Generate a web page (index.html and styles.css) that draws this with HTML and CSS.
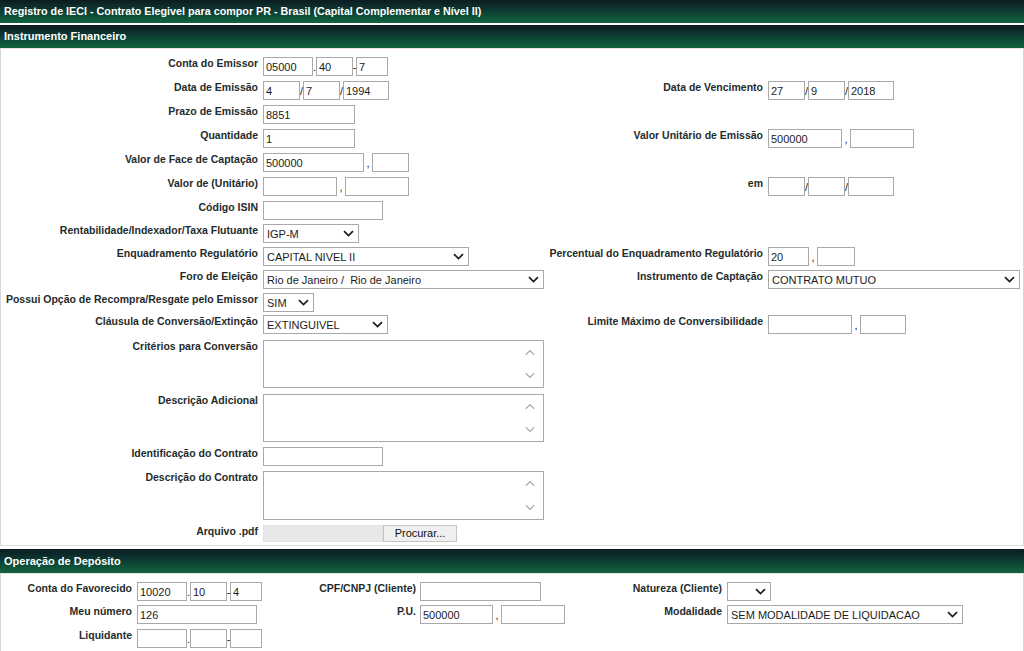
FILE: index.html
```html
<!DOCTYPE html>
<html lang="pt-BR">
<head>
<meta charset="utf-8">
<title>Registro de IECI</title>
<link rel="stylesheet" href="styles.css">
</head>
<body>
<div class="titlebar">Registro de IECI - Contrato Elegivel para compor PR - Brasil (Capital Complementar e Nível II)</div>
<div class="section-bar">Instrumento Financeiro</div>
<div class="panel panel-inst">
  <div class="lbl c1">Conta do Emissor</div>
  <div class="fld"><input class="w50" value="05000"><span class="sep">.</span><input class="w37" value="40"><span class="sep">-</span><input class="w32" value="7"></div>

  <div class="lbl c1">Data de Emissão</div>
  <div class="fld"><input class="w37" value="4"><span class="sep">/</span><input class="w37" value="7"><span class="sep">/</span><input class="w46" value="1994"></div>
  <div class="lbl c3">Data de Vencimento</div>
  <div class="fld"><input class="w37" value="27"><span class="sep">/</span><input class="w37" value="9"><span class="sep">/</span><input class="w46" value="2018"></div>

  <div class="lbl c1">Prazo de Emissão</div>
  <div class="fld"><input class="w92" value="8851"></div>

  <div class="lbl c1">Quantidade</div>
  <div class="fld"><input class="w92" value="1"></div>
  <div class="lbl c3">Valor Unitário de Emissão</div>
  <div class="fld"><input class="w74" value="500000"><span class="sep comma">,</span><input class="w64" value=""></div>

  <div class="lbl c1">Valor de Face de Captação</div>
  <div class="fld"><input class="w101" value="500000"><span class="sep comma">,</span><input class="w37" value=""></div>

  <div class="lbl c1">Valor de (Unitário)</div>
  <div class="fld"><input class="w74" value=""><span class="sep comma">,</span><input class="w64" value=""></div>
  <div class="lbl c3">em</div>
  <div class="fld"><input class="w37" value=""><span class="sep">/</span><input class="w37" value=""><span class="sep">/</span><input class="w46" value=""></div>

  <div class="lbl c1">Código ISIN</div>
  <div class="fld"><input class="w120" value=""></div>

  <div class="lbl c1">Rentabilidade/Indexador/Taxa Flutuante</div>
  <div class="fld"><select class="sel w96"><option>IGP-M</option></select></div>

  <div class="lbl c1">Enquadramento Regulatório</div>
  <div class="fld"><select class="sel w206"><option>CAPITAL NIVEL II</option></select></div>
  <div class="lbl c3">Percentual do Enquadramento Regulatório</div>
  <div class="fld"><input class="w41" value="20"><span class="sep comma">,</span><input class="w38" value=""></div>

  <div class="lbl c1">Foro de Eleição</div>
  <div class="fld"><select class="sel w281"><option>Rio de Janeiro /&nbsp; Rio de Janeiro</option></select></div>
  <div class="lbl c3">Instrumento de Captação</div>
  <div class="fld"><select class="sel w252"><option>CONTRATO MUTUO</option></select></div>

  <div class="lbl c1">Possui Opção de Recompra/Resgate pelo Emissor</div>
  <div class="fld"><select class="sel w51"><option>SIM</option></select></div>

  <div class="lbl c1">Cláusula de Conversão/Extinção</div>
  <div class="fld"><select class="sel w125"><option>EXTINGUIVEL</option></select></div>
  <div class="lbl c3">Limite Máximo de Conversibilidade</div>
  <div class="fld"><input class="w84" value=""><span class="sep comma">,</span><input class="w46" value=""></div>

  <div class="lbl c1">Critérios para Conversão</div>
  <div class="fld"><textarea class="area"></textarea></div>

  <div class="lbl c1">Descrição Adicional</div>
  <div class="fld"><textarea class="area"></textarea></div>

  <div class="lbl c1">Identificação do Contrato</div>
  <div class="fld"><input class="w120" value=""></div>

  <div class="lbl c1">Descrição do Contrato</div>
  <div class="fld"><textarea class="area tall"></textarea></div>

  <div class="lbl c1">Arquivo .pdf</div>
  <div class="fld file"><span class="file-path"></span><button class="browse" type="button">Procurar...</button></div>
</div>

<div class="section-bar second">Operação de Depósito</div>
<div class="panel panel-dep">
  <div class="lbl c1">Conta do Favorecido</div>
  <div class="fld"><input class="w50" value="10020"><span class="sep">.</span><input class="w37" value="10"><span class="sep">-</span><input class="w32" value="4"></div>
  <div class="lbl c3 p4">CPF/CNPJ (Cliente)</div>
  <div class="fld"><input class="w121" value=""></div>
  <div class="lbl c5">Natureza (Cliente)</div>
  <div class="fld"><select class="sel w44"><option></option></select></div>

  <div class="lbl c1">Meu número</div>
  <div class="fld"><input class="w120" value="126"></div>
  <div class="lbl c3 p4">P.U.</div>
  <div class="fld"><input class="w73" value="500000"><span class="sep comma">,</span><input class="w64" value=""></div>
  <div class="lbl c5">Modalidade</div>
  <div class="fld"><select class="sel w236"><option>SEM MODALIDADE DE LIQUIDACAO</option></select></div>

  <div class="lbl c1">Liquidante</div>
  <div class="fld"><input class="w50" value=""><span class="sep">.</span><input class="w37" value=""><span class="sep">-</span><input class="w32" value=""></div>
</div>
</body>
</html>
```

FILE: styles.css
```css
* { box-sizing: border-box; }

html, body {
  margin: 0;
  padding: 0;
  background: #ffffff;
}

body {
  width: 1024px;
  font-family: "Liberation Sans", Arial, sans-serif;
  color: #1e2b2b;
  overflow: hidden;
}

.titlebar,
.section-bar {
  height: 23px;
  line-height: 23px;
  padding-left: 4px;
  color: #ffffff;
  font-weight: bold;
  font-size: 11px;
  white-space: nowrap;
  background: linear-gradient(to bottom, #0c1c22 0%, #0d3630 40%, #0e5239 75%, #13643f 100%);
}

.titlebar {
  font-size: 10.75px;
}

.section-bar {
  margin-top: 2px;
}

.section-bar.second {
  margin-top: 3px;
  height: 24px;
  line-height: 24px;
}

.panel {
  display: grid;
  border: 1px solid #d6d6d6;
  border-top-color: #efdfe1;
  border-bottom-color: #dedede;
}

.panel-inst {
  grid-template-columns: 262px 282px 223px 1fr;
  grid-template-rows: 24px 24px 24px 24px 24px 24px 23px 23px 23px 23px 22px 25px 54px 53px 24px 54px 17px;
  padding: 8px 0 3px;
}

.panel-dep {
  grid-template-columns: 136px 163px 120px 180px 127px 1fr;
  grid-template-rows: 23px 24px 19px;
  padding: 8px 0 12px;
  border-top-color: #e2e6e4;
}

.lbl {
  font-size: 10.5px;
  font-weight: bold;
  line-height: 13px;
  text-align: right;
  white-space: nowrap;
  padding-right: 5px;
  color: #1f2c2c;
}

.lbl.c1 { grid-column: 1; }
.lbl.c3 { grid-column: 3; }
.lbl.c5 { grid-column: 5; }
.lbl.p4 { padding-right: 4px; }

.fld {
  display: flex;
  align-items: flex-start;
  white-space: nowrap;
}

input,
select,
textarea,
button {
  margin: 0;
  font-family: "Liberation Sans", Arial, sans-serif;
  font-size: 11px;
  color: #1c1c1c;
  border-radius: 0;
  outline: none;
}

input {
  height: 19px;
  border: 1px solid #a9a9a9;
  padding: 1px 2px 0;
  background: #ffffff;
}

.sep {
  width: 3px;
  height: 19px;
  line-height: 15px;
  padding-top: 3px;
  font-size: 11px;
  text-align: center;
  color: #222;
  overflow: visible;
  display: flex;
  justify-content: center;
}

.sep.comma {
  width: 8px;
}

.sel {
  -webkit-appearance: none;
  appearance: none;
  height: 19px;
  border: 1px solid #a9a9a9;
  padding: 1px 18px 0 3px;
  background-color: #ffffff;
  background-image: url("data:image/svg+xml,%3Csvg xmlns='http://www.w3.org/2000/svg' width='11' height='7' viewBox='0 0 11 7'%3E%3Cpath d='M1 1.2l4.5 4.3 4.5-4.3' fill='none' stroke='%231c1c1c' stroke-width='1.7'/%3E%3C/svg%3E");
  background-repeat: no-repeat;
  background-position: right 4px center;
}

.area {
  width: 281px;
  height: 48px;
  border: 1px solid #a9a9a9;
  resize: none;
  overflow: hidden;
  padding: 2px;
  background-color: #ffffff;
  background-image:
    url("data:image/svg+xml,%3Csvg xmlns='http://www.w3.org/2000/svg' width='10' height='7' viewBox='0 0 10 7'%3E%3Cpath d='M0.8 5.8l4.2-4.2 4.2 4.2' fill='none' stroke='%23a6a6a6' stroke-width='1.2'/%3E%3C/svg%3E"),
    url("data:image/svg+xml,%3Csvg xmlns='http://www.w3.org/2000/svg' width='10' height='7' viewBox='0 0 10 7'%3E%3Cpath d='M0.8 1.2l4.2 4.2 4.2-4.2' fill='none' stroke='%23a6a6a6' stroke-width='1.2'/%3E%3C/svg%3E");
  background-repeat: no-repeat, no-repeat;
  background-position: right 8px top 8px, right 8px bottom 8px;
}

.area.tall {
  height: 49px;
}

.file-path {
  display: block;
  width: 120px;
  height: 17px;
  background: #e8e8e8;
  border: 1px solid #e2e2e2;
}

.browse {
  width: 74px;
  height: 17px;
  padding: 0;
  border: 1px solid #c4c4c4;
  background: #efefef;
  color: #111;
  line-height: 15px;
}

.w32 { width: 32px; }
.w37 { width: 37px; }
.w38 { width: 38px; }
.w41 { width: 41px; }
.w44 { width: 44px; }
.w46 { width: 46px; }
.w50 { width: 50px; }
.w51 { width: 51px; }
.w64 { width: 64px; }
.w73 { width: 73px; }
.w74 { width: 74px; }
.w84 { width: 84px; }
.w92 { width: 92px; }
.w96 { width: 96px; }
.w101 { width: 101px; }
.w120 { width: 120px; }
.w121 { width: 121px; }
.w125 { width: 125px; }
.w206 { width: 206px; }
.w236 { width: 236px; }
.w252 { width: 252px; }
.w281 { width: 281px; }
```
